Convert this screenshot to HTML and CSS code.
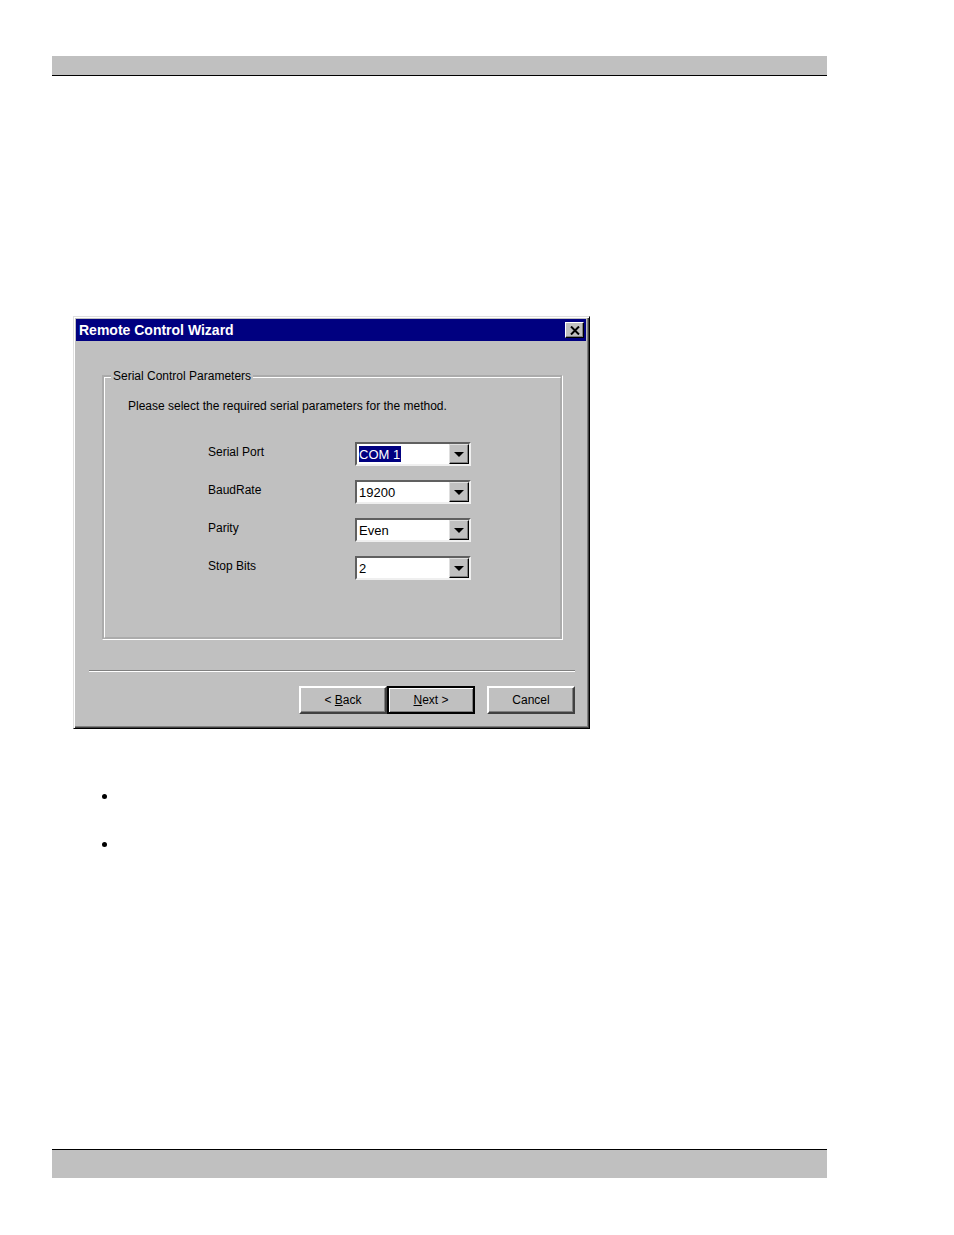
FILE: index.html
```html
<!DOCTYPE html>
<html lang="en">
<head>
  <meta charset="UTF-8" />
  <meta name="viewport" content="width=device-width, initial-scale=1.0" />
  <title>Remote Control Wizard</title>
  <link rel="stylesheet" href="styles.css">
</head>
<body>
  <div class="sheet">
    <header class="sheet-header"></header>
    <main class="content">
      <form class="wizard">
        <div class="title-bar">
          <h1 class="title">Remote Control Wizard</h1>
          <button type="button" class="close" aria-label="Close">
            <svg width="10" height="9" viewBox="0 0 10 9">
              <path d="M1 0.5L9 8.5M9 0.5L1 8.5" stroke="#000" stroke-width="2" fill="none" />
            </svg>
          </button>
        </div>
        <div class="wizard-body">
          <fieldset class="group">
            <legend>Serial Control Parameters</legend>
            <p class="hint">Please select the required serial parameters for the method.</p>
            <div class="fields">
              <div class="field">
                <label for="port">Serial Port</label>
                <div class="combo">
                  <select id="port" class="selected">
                    <option>COM 1</option>
                  </select>
                  <span class="arrow"></span>
                </div>
              </div>
              <div class="field">
                <label for="baud">BaudRate</label>
                <div class="combo">
                  <select id="baud">
                    <option>19200</option>
                  </select>
                  <span class="arrow"></span>
                </div>
              </div>
              <div class="field">
                <label for="parity">Parity</label>
                <div class="combo">
                  <select id="parity">
                    <option>Even</option>
                  </select>
                  <span class="arrow"></span>
                </div>
              </div>
              <div class="field">
                <label for="stop">Stop Bits</label>
                <div class="combo">
                  <select id="stop">
                    <option>2</option>
                  </select>
                  <span class="arrow"></span>
                </div>
              </div>
            </div>
          </fieldset>
          <hr class="divider">
          <div class="actions">
            <button type="button" class="btn">&lt; <u>B</u>ack</button>
            <button type="button" class="btn btn-default"><u>N</u>ext &gt;</button>
            <button type="button" class="btn btn-cancel">Cancel</button>
          </div>
        </div>
      </form>
      <ul class="notes">
        <li></li>
        <li></li>
      </ul>
    </main>
    <footer class="sheet-footer"></footer>
  </div>
</body>
</html>
```

FILE: styles.css
```css
* {
  box-sizing: border-box;
}

body {
  margin: 0;
  background-color: #fff;
  color: #000;
  font-family: "Liberation Sans", Arial, sans-serif;
  font-size: 12px;
  line-height: 16px;
}

/* Page */
.sheet {
  display: flex;
  flex-direction: column;
  min-height: 100vh;
  padding: 56px 127px 57px 52px;
}

.sheet-header {
  height: 20px;
  background-color: #c0c0c0;
  border-bottom: 1px solid #000;
}

.sheet-footer {
  height: 29px;
  background-color: #c0c0c0;
  border-top: 1px solid #000;
}

.content {
  flex: 1;
  padding: 240px 21px 0;
}

/* Wizard window */
.wizard {
  max-width: 517px;
  background-color: #c0c0c0;
  border: 1px solid;
  border-color: #dfdfdf #000 #000 #dfdfdf;
  box-shadow: inset 1px 1px #fff, inset -1px -1px #404040, inset -2px -2px #808080;
  padding: 2px 3px 3px 2px;
}

.title-bar {
  display: flex;
  align-items: center;
  justify-content: space-between;
  height: 22px;
  padding: 0 2px 0 3px;
  background-color: #000080;
}

.title {
  margin: 0;
  color: #fff;
  font-size: 14px;
  font-weight: bold;
}

.close {
  display: flex;
  align-items: center;
  justify-content: center;
  width: 19px;
  height: 16px;
  padding: 0;
  background-color: #c0c0c0;
  border: 1px solid;
  border-color: #fff #000 #000 #fff;
  box-shadow: inset -1px -1px #808080;
}

.wizard-body {
  padding: 27px 11px 11px 13px;
}

.group {
  height: 272px;
  margin: 0 12px 0 13px;
  padding: 0 6px;
  border: 3px groove #fff;
}

.group legend {
  padding: 0 2px;
}

.hint {
  margin: 14px 0 28px 17px;
}

.fields {
  display: flex;
  flex-direction: column;
  gap: 14px;
  margin-left: 97px;
}

.field {
  display: grid;
  grid-template-columns: 147px 116px;
  height: 24px;
}

.field label {
  padding-top: 2px;
}

.combo {
  position: relative;
}

.combo select {
  appearance: none;
  width: 100%;
  height: 100%;
  padding: 0 20px 0 2px;
  background-color: #fff;
  border: 2px solid;
  border-color: #606060 #efefef #efefef #606060;
  border-radius: 0;
  color: #000;
  font-family: inherit;
  font-size: 13px;
}

.combo .selected {
  background-image: linear-gradient(#000080, #000080);
  background-repeat: no-repeat;
  background-position: 2px 2px;
  background-size: 42px 16px;
  color: #fff;
}

.arrow {
  position: absolute;
  top: 2px;
  right: 2px;
  bottom: 2px;
  display: flex;
  align-items: center;
  justify-content: center;
  width: 20px;
  background-color: #c0c0c0;
  border: 1px solid;
  border-color: #dfdfdf #000 #000 #dfdfdf;
  box-shadow: inset -1px -1px #808080;
  pointer-events: none;
}

.arrow::before {
  content: "";
  border: 5px solid transparent;
  border-top-color: #000;
  border-bottom: 0;
}

.divider {
  height: 2px;
  margin: 30px 0 14px;
  border: 0;
  border-top: 1px solid #808080;
  border-bottom: 1px solid #fff;
}

/* Buttons */
.actions {
  display: flex;
  justify-content: flex-end;
}

.btn {
  width: 88px;
  height: 28px;
  padding: 0;
  background-color: #c0c0c0;
  border: 2px solid;
  border-color: #fff #404040 #404040 #fff;
  box-shadow: inset -1px -1px #808080;
  font-family: inherit;
  font-size: 12px;
}

.btn-default {
  border-color: #000;
  box-shadow: inset 1px 1px #fff, inset -1px -1px #808080;
}

.btn-cancel {
  margin-left: 12px;
}

/* Notes under the window */
.notes {
  margin: 58px 0 0;
  padding-left: 46px;
  font-size: 18px;
  line-height: 16px;
}

.notes li {
  height: 16px;
  margin-bottom: 32px;
}
```
